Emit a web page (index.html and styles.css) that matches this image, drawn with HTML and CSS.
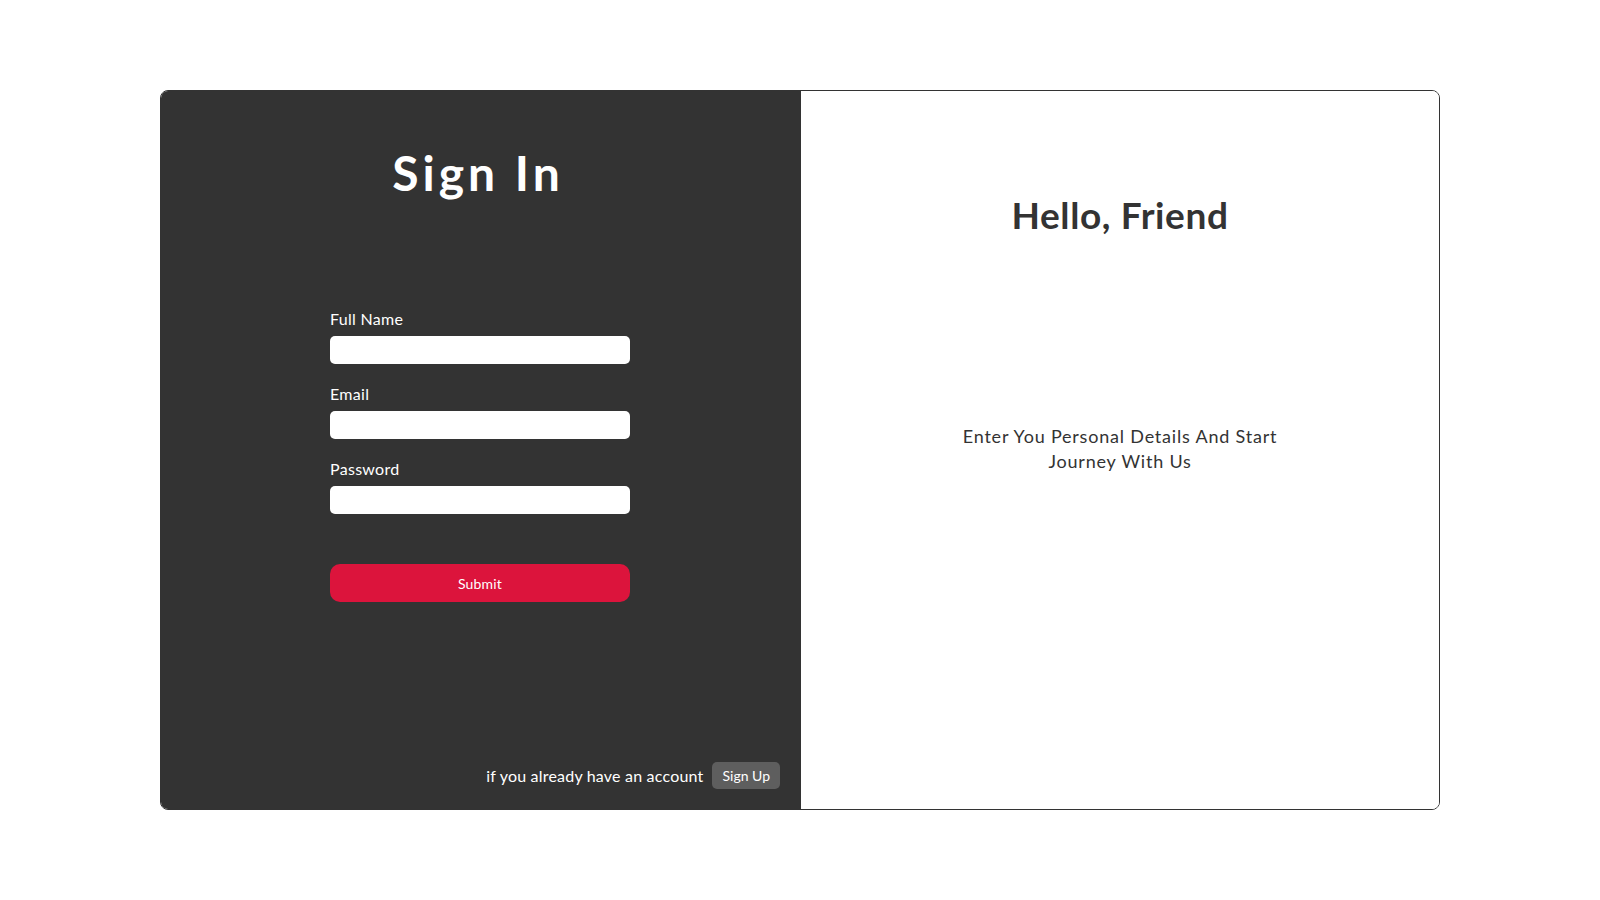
FILE: index.html
```html
<!DOCTYPE html>
<html lang="en">
<head>
<meta charset="utf-8">
<title>Sign In</title>
<link rel="stylesheet" href="styles.css">
</head>
<body>
<main class="page">
  <section class="card">
    <div class="panel-left">
      <h1 class="title">Sign In</h1>
      <form class="form">
        <div class="field">
          <label class="label" for="name">Full Name</label>
          <input class="input" id="name" type="text">
        </div>
        <div class="field">
          <label class="label" for="email">Email</label>
          <input class="input" id="email" type="email">
        </div>
        <div class="field">
          <label class="label" for="pw">Password</label>
          <input class="input" id="pw" type="password">
        </div>
        <button class="submit" type="button">Submit</button>
      </form>
      <div class="footer">
        <span class="footer-text">if you already have an account</span>
        <button class="signup" type="button">Sign Up</button>
      </div>
    </div>
    <div class="panel-right">
      <h2 class="hello">Hello, Friend</h2>
      <p class="intro">Enter You Personal Details And Start Journey With Us</p>
    </div>
  </section>
</main>
</body>
</html>
```

FILE: styles.css
```css
* { box-sizing: border-box; }

html, body {
  margin: 0;
  padding: 0;
  background: #ffffff;
  font-family: "Lato", "Noto Sans", sans-serif;
}

.page {
  height: 100vh;
  display: flex;
  align-items: center;
  justify-content: center;
}

.card {
  width: 1280px;
  height: 720px;
  border: 1px solid #333333;
  border-radius: 8px;
  overflow: hidden;
  display: flex;
}

.panel-left {
  width: 640px;
  flex: none;
  background: #333333;
  color: #ffffff;
  display: flex;
  flex-direction: column;
  align-items: center;
  padding: 58px 21px 20px 19px;
}

.title {
  margin: 0;
  font-size: 48px;
  line-height: 1;
  font-weight: 700;
  letter-spacing: 4px;
  padding-left: 0;
  margin-right: 4px;
}

.form {
  margin-top: 112px;
  width: 300px;
  display: flex;
  flex-direction: column;
  gap: 20px;
}

.field {
  display: flex;
  flex-direction: column;
  gap: 7px;
}

.label {
  font-size: 16px;
  line-height: 20px;
  letter-spacing: 0.3px;
  color: #ffffff;
}

.input {
  height: 28px;
  width: 100%;
  border: none;
  border-radius: 5px;
  background: #ffffff;
  outline: none;
  padding: 0 8px;
}

.submit {
  margin-top: 30px;
  height: 38px;
  width: 100%;
  border: none;
  border-radius: 10px;
  background: #dc143c;
  color: #ffffff;
  font-family: inherit;
  font-size: 14px;
  letter-spacing: 0.2px;
}

.footer {
  margin-top: auto;
  align-self: flex-end;
  display: flex;
  align-items: center;
  gap: 9px;
}

.footer-text {
  font-size: 16px;
  letter-spacing: 0.2px;
  color: #ffffff;
}

.signup {
  height: 27px;
  padding: 0 10px;
  border: none;
  border-radius: 5px;
  background: #5e5e5e;
  color: #ffffff;
  font-family: inherit;
  font-size: 14px;
}

.panel-right {
  flex: 1;
  background: #ffffff;
  color: #333333;
  display: flex;
  flex-direction: column;
  align-items: center;
  padding-top: 105px;
}

.hello {
  margin: 0;
  font-size: 37px;
  line-height: 1;
  font-weight: 700;
  letter-spacing: 0.6px;
}

.intro {
  margin: 191px 0 0;
  width: 340px;
  text-align: center;
  font-size: 18px;
  line-height: 25px;
  letter-spacing: 0.8px;
  color: #333333;
}
```
